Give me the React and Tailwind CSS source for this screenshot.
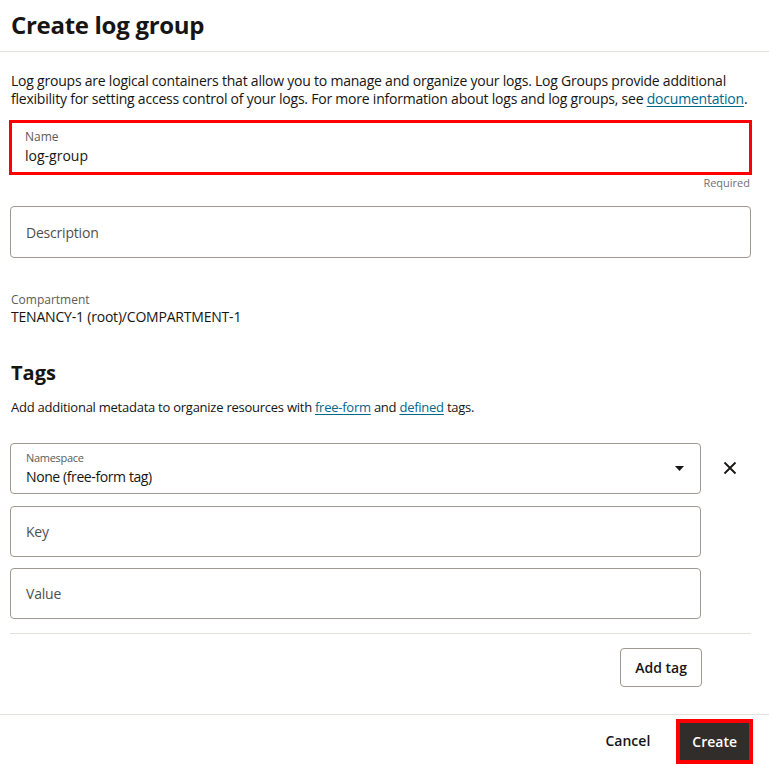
const font = { fontFamily: '"Open Sans", "Noto Sans", sans-serif' }

function Field({ label, className = '' }) {
    return (
        <div className={`rounded border border-[#9e9892] flex items-center px-[15px] ${className}`}>
            <span className="text-[14px] text-[#4f4f4f] tracking-[-0.2px]">{label}</span>
        </div>
    )
}

export default function App() {
    return (
        <div className="w-[769px] h-[765px] bg-white text-[#161513] flex flex-col overflow-hidden" style={font}>
            {/* header */}
            <div className="h-[52px] border-b border-[#e4e1dd] pl-[11px] flex items-center">
                <h1 className="text-[24px] font-bold tracking-[-0.3px] leading-none -mt-[2px]">Create log group</h1>
            </div>

            <div className="flex-1 pl-[10px] pr-[18px] pt-[20px]">
                <p className="text-[14px] leading-[18px] tracking-[-0.22px] pl-[1px]">
                    Log groups are logical containers that allow you to manage and organize your logs. Log Groups provide additional
                    flexibility for setting access control of your logs. For more information about logs and log groups, see{' '}
                    <span className="whitespace-nowrap"><a className="text-[#00688c] underline underline-offset-2">documentation</a>.</span>
                </p>

                {/* name */}
                <div className="mt-[12px] -ml-[1px] -mr-[1px] h-[55px] border-[3px] border-[#ff0000] pl-[13px] pt-[6px]">
                    <div className="text-[12px] text-[#5b5b5b] leading-[16px]">Name</div>
                    <div className="text-[14px] leading-[20px] mt-[1px]">log-group</div>
                </div>
                <div className="text-right text-[11px] text-[#6f6f6f] mt-[1px] leading-[14px] pr-[1px]">Required</div>

                <Field label="Description" className="mt-[16px] h-[52px]" />

                <div className="mt-[34px] text-[12px] text-[#5b5b5b] leading-[16px] pl-[1px]">Compartment</div>
                <div className="text-[14px] leading-[18px] tracking-[-0.2px] pl-[1px]">TENANCY-1 (root)/COMPARTMENT-1</div>

                <h2 className="mt-[33px] text-[20px] font-bold leading-[28px] pl-[1px]">Tags</h2>
                <p className="mt-[12px] text-[13px] leading-[16px] tracking-[-0.25px] pl-[1px]">
                    Add additional metadata to organize resources with{' '}
                    <a className="text-[#00688c] underline underline-offset-2">free-form</a> and{' '}
                    <a className="text-[#00688c] underline underline-offset-2">defined</a> tags.
                </p>

                <div className="mt-[28px] flex items-center gap-[22px]">
                    <div className="w-[691px] h-[51px] rounded border border-[#9e9892] flex items-center pl-[15px] pr-[16px]">
                        <div className="flex-1">
                            <div className="text-[11px] text-[#5b5b5b] leading-[14px] tracking-[-0.3px]">Namespace</div>
                            <div className="text-[14px] leading-[20px] mt-[2px] tracking-[-0.4px]">None (free-form tag)</div>
                        </div>
                        <svg width="9" height="5" viewBox="0 0 9 5"><path d="M0 0h9L4.5 5z" fill="#161513" /></svg>
                    </div>
                    <svg width="14" height="14" viewBox="0 0 14 14" className="-mt-[2px]">
                        <path d="M1.5 1.5l11 11M12.5 1.5l-11 11" stroke="#161513" strokeWidth="1.8" />
                    </svg>
                </div>
                <Field label="Key" className="mt-[12px] w-[691px] h-[51px]" />
                <Field label="Value" className="mt-[11px] w-[691px] h-[51px]" />

                <div className="mt-[14px] border-t border-[#e4e1dd]" />
                <div className="flex mt-[14px] w-[692px] justify-end">
                    <button className="h-[39px] px-[14px] rounded border border-[#9e9892] text-[14px] font-semibold">Add tag</button>
                </div>
            </div>

            {/* footer */}
            <div className="h-[51px] border-t border-[#e4e1dd] flex items-center justify-end pr-[16px] gap-[14px]">
                <button className="text-[14px] font-semibold px-[12px] h-[37px]">Cancel</button>
                <div className="border-[4px] border-[#ff0000] mt-[2px]">
                    <button className="h-[37px] px-[12px] bg-[#312d2a] text-white text-[14px] font-semibold">Create</button>
                </div>
            </div>
        </div>
    )
}
